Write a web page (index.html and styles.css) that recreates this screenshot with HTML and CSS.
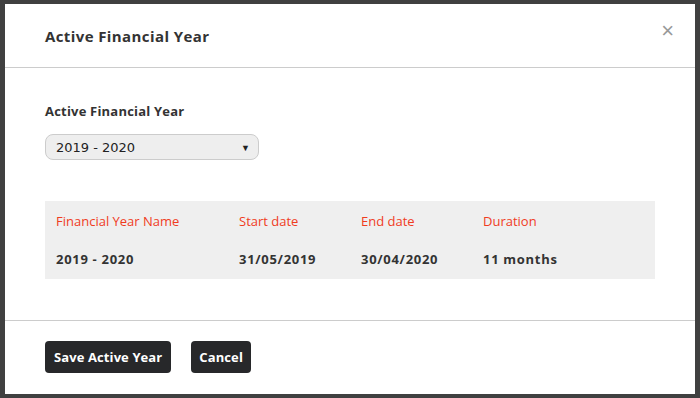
FILE: index.html
```html
<!DOCTYPE html>
<html lang="en">
<head>
    <meta charset="UTF-8">
    <meta name="viewport" content="width=device-width, initial-scale=1.0">
    <title>Active Financial Year</title>
    <link rel="stylesheet" href="styles.css">
</head>
<body>

    <div class="modal">
        <div class="modal-header">
            <h2 class="modal-title">Active Financial Year</h2>
            <button type="button" class="close">&times;</button>
        </div>

        <div class="modal-body">
            <label for="activeYear" class="field-label">Active Financial Year</label>
            <div class="select-wrap">
                <select id="activeYear" name="activeYear">
                    <option value="2019">2019 - 2020</option>
                    <option value="2018">2018 - 2019</option>
                </select>
                <span class="select-arrow">&#9660;</span>
            </div>

            <div class="year-info">
                <div class="info-col name-col">
                    <span class="info-head">Financial Year Name</span>
                    <span class="info-value">2019 - 2020</span>
                </div>
                <div class="info-col">
                    <span class="info-head">Start date</span>
                    <span class="info-value">31/05/2019</span>
                </div>
                <div class="info-col">
                    <span class="info-head">End date</span>
                    <span class="info-value">30/04/2020</span>
                </div>
                <div class="info-col">
                    <span class="info-head">Duration</span>
                    <span class="info-value">11 months</span>
                </div>
            </div>
        </div>

        <div class="modal-footer">
            <button type="button" class="btn">Save Active Year</button>
            <button type="button" class="btn">Cancel</button>
        </div>
    </div>

</body>
</html>
```

FILE: styles.css
```css
body {
    margin: 0;
    padding: 4px 5px;
    background-color: #404040;
    font-family: "Open Sans", Arial, sans-serif;
    color: #333;
}

.modal {
    background-color: #fff;
    height: 390px;
    display: flex;
    flex-direction: column;
}

.modal-header {
    height: 63px;
    border-bottom: 1px solid #ccc;
    display: flex;
    align-items: center;
    justify-content: space-between;
    padding: 0 21px 0 40px;
}

.modal-title {
    margin: 0;
    font-size: 15px;
    font-weight: bold;
    letter-spacing: 0.4px;
    color: #333;
}

.close {
    border: none;
    background: none;
    color: #999;
    font-size: 22px;
    font-family: Arial, sans-serif;
    padding: 0;
    margin-top: -10px;
    cursor: pointer;
}

.modal-body {
    height: 252px;
    border-bottom: 1px solid #ccc;
    padding: 0 40px;
}

.field-label {
    display: block;
    margin-top: 34px;
    font-size: 13px;
    font-weight: bold;
    letter-spacing: 0.2px;
    color: #333;
}

.select-wrap {
    position: relative;
    width: 214px;
    margin-top: 14px;
}

select {
    width: 100%;
    height: 26px;
    padding: 0 10px;
    border: 1px solid #ccc;
    border-radius: 8px;
    background-color: #eee;
    font-family: "DejaVu Sans", Tahoma, sans-serif;
    font-size: 13px;
    color: #222;
    appearance: none;
    -webkit-appearance: none;
}

.select-arrow {
    position: absolute;
    right: 9px;
    top: 7px;
    font-size: 9px;
    color: #222;
    pointer-events: none;
}

.year-info {
    display: flex;
    margin-top: 41px;
    background-color: #efefef;
    height: 78px;
    padding: 0 11px;
}

.info-col {
    display: flex;
    flex-direction: column;
    width: 122px;
    padding-top: 11px;
}

.name-col {
    width: 183px;
}

.info-head {
    color: #f03c1e;
    font-size: 13px;
}

.info-value {
    margin-top: 20px;
    font-size: 13px;
    font-weight: bold;
    letter-spacing: 0.7px;
    color: #333;
}

.modal-footer {
    display: flex;
    gap: 20px;
    padding: 20px 40px;
}

.btn {
    height: 32px;
    padding: 0 9px;
    border: none;
    border-radius: 4px;
    background-color: #27282a;
    color: #fff;
    font-family: "Open Sans", Arial, sans-serif;
    font-size: 13px;
    font-weight: bold;
    letter-spacing: 0.1px;
    cursor: pointer;
}

.btn + .btn {
    padding: 0 8px;
}
```
